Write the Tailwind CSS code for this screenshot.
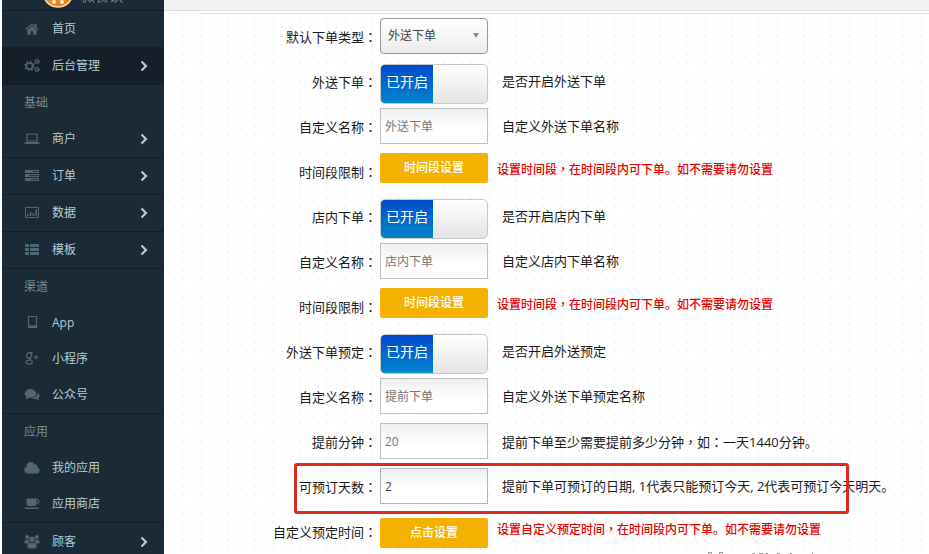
<!DOCTYPE html>
<html lang="zh-CN">
<head>
<meta charset="utf-8">
<meta name="viewport" content="width=device-width, initial-scale=1">
<title>下单设置</title>
<script src="https://cdn.jsdelivr.net/npm/@tailwindcss/browser@4"></script>
</head>
<body class="h-screen overflow-hidden bg-white font-['Open_Sans','Noto_Sans_CJK_SC',sans-serif] text-[13px] text-[#1a1a1a]">
<svg class="hidden" aria-hidden="true">
  <symbol id="chev" viewBox="0 0 8 12"><path d="M1.500 1.500 6 6l-4.500 4.500" fill="none" stroke="currentColor" stroke-width="2.200"/></symbol>
  <symbol id="home" viewBox="0 0 16 16"><path d="M8 5 3.300 9v4.500h3.500v-3.300h2.400v3.300h3.500V9zM8 2.300 1.200 8l.8.900L8 4l6 4.900.8-.9-2.300-2V3h-1.800v1.500z"/></symbol>
  <symbol id="gears" viewBox="0 0 16 16"><g fill="none" stroke="currentColor"><circle cx="5.500" cy="8" r="3.100" stroke-width="1.500"/><circle cx="5.500" cy="8" r="4.500" stroke-width="1.500" stroke-dasharray="1.700 1.834"/><circle cx="13" cy="3.500" r="1.600" stroke-width="1.200"/><circle cx="13" cy="3.500" r="2.400" stroke-dasharray="1 1.513"/><circle cx="13" cy="11.500" r="1.600" stroke-width="1.200"/><circle cx="13" cy="11.500" r="2.400" stroke-dasharray="1 1.513"/></g></symbol>
  <symbol id="laptop" viewBox="0 0 16 16"><path d="M3 3h10v7H3z" fill="none" stroke="currentColor" stroke-width="1.200"/><path d="M.5 11h15v1.200l-1 .8h-13l-1-.8z"/></symbol>
  <symbol id="tasks" viewBox="0 0 16 16"><path d="M1 2h14v3H1zM1 6h14v3H1zM1 10h14v3H1z"/><path d="M9 3.500h5M5 7.500h9M7 11.500h7" stroke="#1c2a36" stroke-width=".8"/></symbol>
  <symbol id="chart" viewBox="0 0 16 16"><path d="M1.500 2.500h13v10h-13z" fill="none" stroke="currentColor"/><path d="M3 9h1.600v2H3zM5.800 7h1.600v4H5.800zM8.600 8h1.600v3H8.600zM11.400 4.500H13V11h-1.600z"/></symbol>
  <symbol id="list" viewBox="0 0 16 16"><path d="M1 2h4v3H1zM6 2h9v3H6zM1 6h4v3H1zM6 6h9v3H6zM1 10h4v3H1zM6 10h9v3H6z"/></symbol>
  <symbol id="tablet" viewBox="0 0 16 16"><path d="M4.500 1.500h8v11h-8z" fill="none" stroke="currentColor" stroke-width="1.200"/><path d="M4 10.500h9V13H4z"/></symbol>
  <symbol id="gplus" viewBox="0 0 16 16"><g fill="none" stroke="currentColor" stroke-width="1.300"><ellipse cx="5.200" cy="4.400" rx="2.500" ry="2.700"/><path d="M9 1.600H5.300M6.500 6.900c-1.600.9-.6 1.400.8 2.300 1.800 1.200 1.300 4-2 4S1 10.200 3 9.500c1-.4 2-.4 3-.4M12 4.300v4M10 6.300h4"/></g></symbol>
  <symbol id="chat" viewBox="0 0 16 16"><ellipse cx="6.500" cy="6.500" rx="5.800" ry="4.400"/><path d="M2.500 9.500 1.500 12.300 6 10.500zM13.300 6c2.800 1.300 2.800 4 .8 5.300l1 1.900-3-1.200c-2 .3-3.800-.2-4.600-1 3.300-.2 5.900-2.200 5.800-5z"/></symbol>
  <symbol id="cloud" viewBox="0 0 16 16"><path d="M3.800 13.500A3.600 3.600 0 0 1 2.500 6.600a4.300 4.300 0 0 1 7.900-2.500 2.700 2.700 0 0 1 3 3.300 3.100 3.100 0 0 1-.6 6.100z"/></symbol>
  <symbol id="cup" viewBox="0 0 16 16"><path d="M2.500 2.500h10v5.500a2 2 0 0 1-2 2h-6a2 2 0 0 1-2-2zM.8 11.500h14V13H.8z"/><path d="M12.300 3.700h.7a1.900 1.900 0 0 1 0 3.800h-.7" fill="none" stroke="currentColor" stroke-width="1.200"/></symbol>
  <symbol id="users" viewBox="0 0 16 16"><circle cx="3.200" cy="3" r="2"/><circle cx="12.800" cy="3" r="2"/><circle cx="8" cy="5.200" r="2.700"/><path d="M.3 8.900c0-2.800 1.200-3.500 2.500-3.500l2 .5c0 1 .2 1.800.8 2.400-1 0-1.600.4-2 1.100H1zM15.700 8.900c0-2.800-1.200-3.500-2.500-3.500l-2 .5c0 1-.2 1.800-.8 2.400 1 0 1.600.4 2 1.100H15zM3.300 12.400c0-3 1-4 2.500-4 1.400.9 3 .9 4.400 0 1.500 0 2.500 1 2.500 4 0 1.300-.8 2-2 2H5.300c-1.200 0-2-.7-2-2z"/></symbol>
</svg>

<div class="flex h-full pl-[2px]">
  <nav class="w-[162px] shrink-0 overflow-hidden bg-[#1c2a36] text-[12px] text-[#b4ccd6]" aria-label="主菜单">
    <div class="relative h-[10px] overflow-hidden">
      <svg class="absolute bottom-[2px] left-[40px] h-[32px] w-[32px]" viewBox="0 0 32 32" aria-hidden="true"><circle cx="16" cy="16" r="15" fill="#ee8420" stroke="#f6ddb5" stroke-width="1.500"/><path d="M10 21h12v3H10z" fill="#fff5e6"/><circle cx="12" cy="26" r="2" fill="#fff5e6"/><circle cx="20" cy="26" r="2" fill="#fff5e6"/></svg>
      <span class="absolute bottom-[4px] left-[79px] text-[14px] leading-[20px] text-[#6e7e89]">微餐饮</span>
    </div>
    <a href="#" class="flex h-[37px] items-center border-t border-[#121d27] pl-[22px]"><svg class="mr-[12px] h-[16px] w-[16px] fill-current text-[#4e6675]"><use href="#home"/></svg>首页</a>
    <a href="#" class="flex h-[38px] items-center border-b border-[#121d27] bg-[#141f29] pr-[16px] pl-[22px]"><svg class="mr-[12px] h-[16px] w-[16px] fill-current text-[#4e6675]"><use href="#gears"/></svg>后台管理<svg class="ml-auto h-[12px] w-[8px]"><use href="#chev"/></svg></a>
    <h2 class="flex h-[36px] items-center pl-[22px] text-[#6f8b98]">基础</h2>
    <a href="#" class="flex h-[37px] items-center border-b border-[#121d27] pr-[16px] pl-[22px]"><svg class="mr-[12px] h-[16px] w-[16px] fill-current text-[#4e6675]"><use href="#laptop"/></svg>商户<svg class="ml-auto h-[12px] w-[8px]"><use href="#chev"/></svg></a>
    <a href="#" class="flex h-[37px] items-center border-b border-[#121d27] pr-[16px] pl-[22px]"><svg class="mr-[12px] h-[16px] w-[16px] fill-current text-[#4e6675]"><use href="#tasks"/></svg>订单<svg class="ml-auto h-[12px] w-[8px]"><use href="#chev"/></svg></a>
    <a href="#" class="flex h-[37px] items-center border-b border-[#121d27] pr-[16px] pl-[22px]"><svg class="mr-[12px] h-[16px] w-[16px] fill-current text-[#4e6675]"><use href="#chart"/></svg>数据<svg class="ml-auto h-[12px] w-[8px]"><use href="#chev"/></svg></a>
    <a href="#" class="flex h-[37px] items-center border-b border-[#121d27] pr-[16px] pl-[22px]"><svg class="mr-[12px] h-[16px] w-[16px] fill-current text-[#4e6675]"><use href="#list"/></svg>模板<svg class="ml-auto h-[12px] w-[8px]"><use href="#chev"/></svg></a>
    <h2 class="flex h-[36px] items-center pl-[22px] text-[#6f8b98]">渠道</h2>
    <a href="#" class="flex h-[36px] items-center pl-[22px]"><svg class="mr-[12px] h-[16px] w-[16px] fill-current text-[#4e6675]"><use href="#tablet"/></svg>App</a>
    <a href="#" class="flex h-[36px] items-center pl-[22px]"><svg class="mr-[12px] h-[16px] w-[16px] fill-current text-[#4e6675]"><use href="#gplus"/></svg>小程序</a>
    <a href="#" class="flex h-[37px] items-center border-b border-[#121d27] pl-[22px]"><svg class="mr-[12px] h-[16px] w-[16px] fill-current text-[#4e6675]"><use href="#chat"/></svg>公众号</a>
    <h2 class="flex h-[36px] items-center pl-[22px] text-[#6f8b98]">应用</h2>
    <a href="#" class="flex h-[36px] items-center pl-[22px]"><svg class="mr-[12px] h-[16px] w-[16px] fill-current text-[#4e6675]"><use href="#cloud"/></svg>我的应用</a>
    <a href="#" class="flex h-[37px] items-center border-b border-[#121d27] pl-[22px]"><svg class="mr-[12px] h-[16px] w-[16px] fill-current text-[#4e6675]"><use href="#cup"/></svg>应用商店</a>
    <a href="#" class="flex h-[37px] items-center pr-[16px] pl-[22px]"><svg class="mr-[12px] h-[16px] w-[16px] fill-current text-[#4e6675]"><use href="#users"/></svg>顾客<svg class="ml-auto h-[12px] w-[8px]"><use href="#chev"/></svg></a>
  </nav>

  <main class="relative min-w-0 flex-1 overflow-hidden">
    <div class="h-[11px] border-b border-[#dcdcdc] bg-[#f1f2f1]"></div>
    <div class="ml-[36px] h-[3px] border-b border-[#dedede]"></div>
    <form class="ml-[6px] bg-[radial-gradient(circle,#f0f0f0_1px,transparent_1px)] bg-size-[9px_9px]">
      <div class="flex h-[45px] items-start">
        <label for="type" class="w-[207px] shrink-0 text-right leading-[45px]">默认下单类型<span lang="zh-TW" class="font-['Noto_Sans_CJK_TC']">：</span></label>
        <div class="relative mt-[4px] ml-[3px] w-[108px] shrink-0">
          <select id="type" class="block h-[36px] w-full appearance-none rounded-[4px] border border-[#999] bg-linear-to-b from-white to-[#ececec] pl-[7px] text-[12px] text-[#444]"><option>外送下单</option></select>
          <svg class="pointer-events-none absolute top-[15px] right-[9px] h-[5px] w-[6px]" viewBox="0 0 6 5" aria-hidden="true"><path d="M0 0h6L3 5z" fill="#888"/></svg>
        </div>
      </div>
      <div class="flex h-[45px] items-start">
        <label for="s1" class="w-[207px] shrink-0 text-right leading-[45px]">外送下单<span lang="zh-TW" class="font-['Noto_Sans_CJK_TC']">：</span></label>
        <button id="s1" type="button" role="switch" aria-checked="true" class="mt-[5px] ml-[3px] flex h-[40px] w-[108px] shrink-0 overflow-hidden rounded-[5px] border border-[#c8c8c8] bg-linear-to-b from-white to-[#e4e4e4] text-[14px] text-white"><span class="flex h-full w-[52px] items-center justify-center bg-linear-to-b from-[#0049cc] to-[#0086cc] pb-[5px]">已开启</span></button>
        <p class="ml-[14px] whitespace-nowrap leading-[45px]">是否开启外送下单</p>
      </div>
      <div class="flex h-[45px] items-start">
        <label for="n1" class="w-[207px] shrink-0 text-right leading-[45px]">自定义名称<span lang="zh-TW" class="font-['Noto_Sans_CJK_TC']">：</span></label>
        <input id="n1" type="text" placeholder="外送下单" class="mt-[4px] ml-[3px] h-[36px] w-[108px] shrink-0 border border-[#c0c0c0] bg-linear-to-b from-[#eee] to-white to-60% pl-[4px] text-[12px] placeholder:text-[#777]">
        <p class="ml-[14px] whitespace-nowrap leading-[45px]">自定义外送下单名称</p>
      </div>
      <div class="flex h-[45px] items-start">
        <label for="b1" class="w-[207px] shrink-0 text-right leading-[45px]">时间段限制<span lang="zh-TW" class="font-['Noto_Sans_CJK_TC']">：</span></label>
        <button id="b1" type="button" class="mt-[4px] ml-[3px] h-[30px] w-[108px] shrink-0 rounded-[2px] bg-[#f5b100] text-[12px] font-medium text-white">时间段设置</button>
        <p class="ml-[9px] whitespace-nowrap text-[12px] leading-[40px] font-medium text-[#e60000]">设置时间段<span lang="zh-TW" class="font-['Noto_Sans_CJK_TC']">，</span>在时间段内可下单。如不需要请勿设置</p>
      </div>
      <div class="flex h-[45px] items-start">
        <label for="s2" class="w-[207px] shrink-0 text-right leading-[45px]">店内下单<span lang="zh-TW" class="font-['Noto_Sans_CJK_TC']">：</span></label>
        <button id="s2" type="button" role="switch" aria-checked="true" class="mt-[5px] ml-[3px] flex h-[40px] w-[108px] shrink-0 overflow-hidden rounded-[5px] border border-[#c8c8c8] bg-linear-to-b from-white to-[#e4e4e4] text-[14px] text-white"><span class="flex h-full w-[52px] items-center justify-center bg-linear-to-b from-[#0049cc] to-[#0086cc] pb-[5px]">已开启</span></button>
        <p class="ml-[14px] whitespace-nowrap leading-[45px]">是否开启店内下单</p>
      </div>
      <div class="flex h-[45px] items-start">
        <label for="n2" class="w-[207px] shrink-0 text-right leading-[45px]">自定义名称<span lang="zh-TW" class="font-['Noto_Sans_CJK_TC']">：</span></label>
        <input id="n2" type="text" placeholder="店内下单" class="mt-[4px] ml-[3px] h-[36px] w-[108px] shrink-0 border border-[#c0c0c0] bg-linear-to-b from-[#eee] to-white to-60% pl-[4px] text-[12px] placeholder:text-[#777]">
        <p class="ml-[14px] whitespace-nowrap leading-[45px]">自定义店内下单名称</p>
      </div>
      <div class="flex h-[45px] items-start">
        <label for="b2" class="w-[207px] shrink-0 text-right leading-[45px]">时间段限制<span lang="zh-TW" class="font-['Noto_Sans_CJK_TC']">：</span></label>
        <button id="b2" type="button" class="mt-[4px] ml-[3px] h-[30px] w-[108px] shrink-0 rounded-[2px] bg-[#f5b100] text-[12px] font-medium text-white">时间段设置</button>
        <p class="ml-[9px] whitespace-nowrap text-[12px] leading-[40px] font-medium text-[#e60000]">设置时间段<span lang="zh-TW" class="font-['Noto_Sans_CJK_TC']">，</span>在时间段内可下单。如不需要请勿设置</p>
      </div>
      <div class="flex h-[45px] items-start">
        <label for="s3" class="w-[207px] shrink-0 text-right leading-[45px]">外送下单预定<span lang="zh-TW" class="font-['Noto_Sans_CJK_TC']">：</span></label>
        <button id="s3" type="button" role="switch" aria-checked="true" class="mt-[5px] ml-[3px] flex h-[40px] w-[108px] shrink-0 overflow-hidden rounded-[5px] border border-[#c8c8c8] bg-linear-to-b from-white to-[#e4e4e4] text-[14px] text-white"><span class="flex h-full w-[52px] items-center justify-center bg-linear-to-b from-[#0049cc] to-[#0086cc] pb-[5px]">已开启</span></button>
        <p class="ml-[14px] whitespace-nowrap leading-[45px]">是否开启外送预定</p>
      </div>
      <div class="flex h-[45px] items-start">
        <label for="n3" class="w-[207px] shrink-0 text-right leading-[45px]">自定义名称<span lang="zh-TW" class="font-['Noto_Sans_CJK_TC']">：</span></label>
        <input id="n3" type="text" placeholder="提前下单" class="mt-[4px] ml-[3px] h-[36px] w-[108px] shrink-0 border border-[#c0c0c0] bg-linear-to-b from-[#eee] to-white to-60% pl-[4px] text-[12px] placeholder:text-[#777]">
        <p class="ml-[14px] whitespace-nowrap leading-[45px]">自定义外送下单预定名称</p>
      </div>
      <div class="flex h-[45px] items-start">
        <label for="mins" class="w-[207px] shrink-0 text-right leading-[45px]">提前分钟<span lang="zh-TW" class="font-['Noto_Sans_CJK_TC']">：</span></label>
        <input id="mins" type="text" placeholder="20" class="mt-[4px] ml-[3px] h-[36px] w-[108px] shrink-0 border border-[#c0c0c0] bg-linear-to-b from-[#eee] to-white to-60% pl-[4px] text-[12px] placeholder:text-[#777]">
        <p class="ml-[14px] whitespace-nowrap leading-[45px]">提前下单至少需要提前多少分钟<span lang="zh-TW" class="font-['Noto_Sans_CJK_TC']">，</span>如<span lang="zh-TW" class="font-['Noto_Sans_CJK_TC']">：</span>一天1440分钟。</p>
      </div>
      <div class="relative flex h-[45px] items-start">
        <label for="days" class="w-[207px] shrink-0 text-right leading-[45px]">可预订天数<span lang="zh-TW" class="font-['Noto_Sans_CJK_TC']">：</span></label>
        <input id="days" type="text" value="2" class="mt-[4px] ml-[3px] h-[36px] w-[108px] shrink-0 border border-[#b4b4c0] bg-linear-to-b from-[#eee] to-white to-60% pl-[4px] text-[12px] text-[#444]">
        <p class="ml-[14px] whitespace-nowrap leading-[45px]">提前下单可预订的日期, 1代表只能预订今天, 2代表可预订今天明天。</p>
        <div class="pointer-events-none absolute -top-px left-[124px] h-[51px] w-[555px] rounded-[3px] border-3 border-[#d92b22]"></div>
      </div>
      <div class="relative flex h-[45px] items-start">
        <label for="b3" class="w-[207px] shrink-0 text-right leading-[45px]">自定义预定时间<span lang="zh-TW" class="font-['Noto_Sans_CJK_TC']">：</span></label>
        <button id="b3" type="button" class="mt-[9px] ml-[3px] h-[30px] w-[108px] shrink-0 rounded-[2px] bg-[#f5b100] text-[12px] font-medium text-white">点击设置</button>
        <p class="ml-[9px] whitespace-nowrap text-[12px] leading-[40px] font-medium text-[#e60000]">设置自定义预定时间<span lang="zh-TW" class="font-['Noto_Sans_CJK_TC']">，</span>在时间段内可下单。如不需要请勿设置</p>
        <svg class="absolute bottom-0 left-[536px] h-[3px] w-[110px]" viewBox="0 0 110 3" fill="none" stroke="#999" aria-hidden="true"><path d="M2.500 3V1.500h3V3M13.500 3V1.500h3V3M46 2.500h3M53 2.500h4M60 2.500h2M71 2.500h3M84 2.500h2M106 2.500h1"/></svg>
      </div>
    </form>
  </main>
</div>
</body>
</html>
